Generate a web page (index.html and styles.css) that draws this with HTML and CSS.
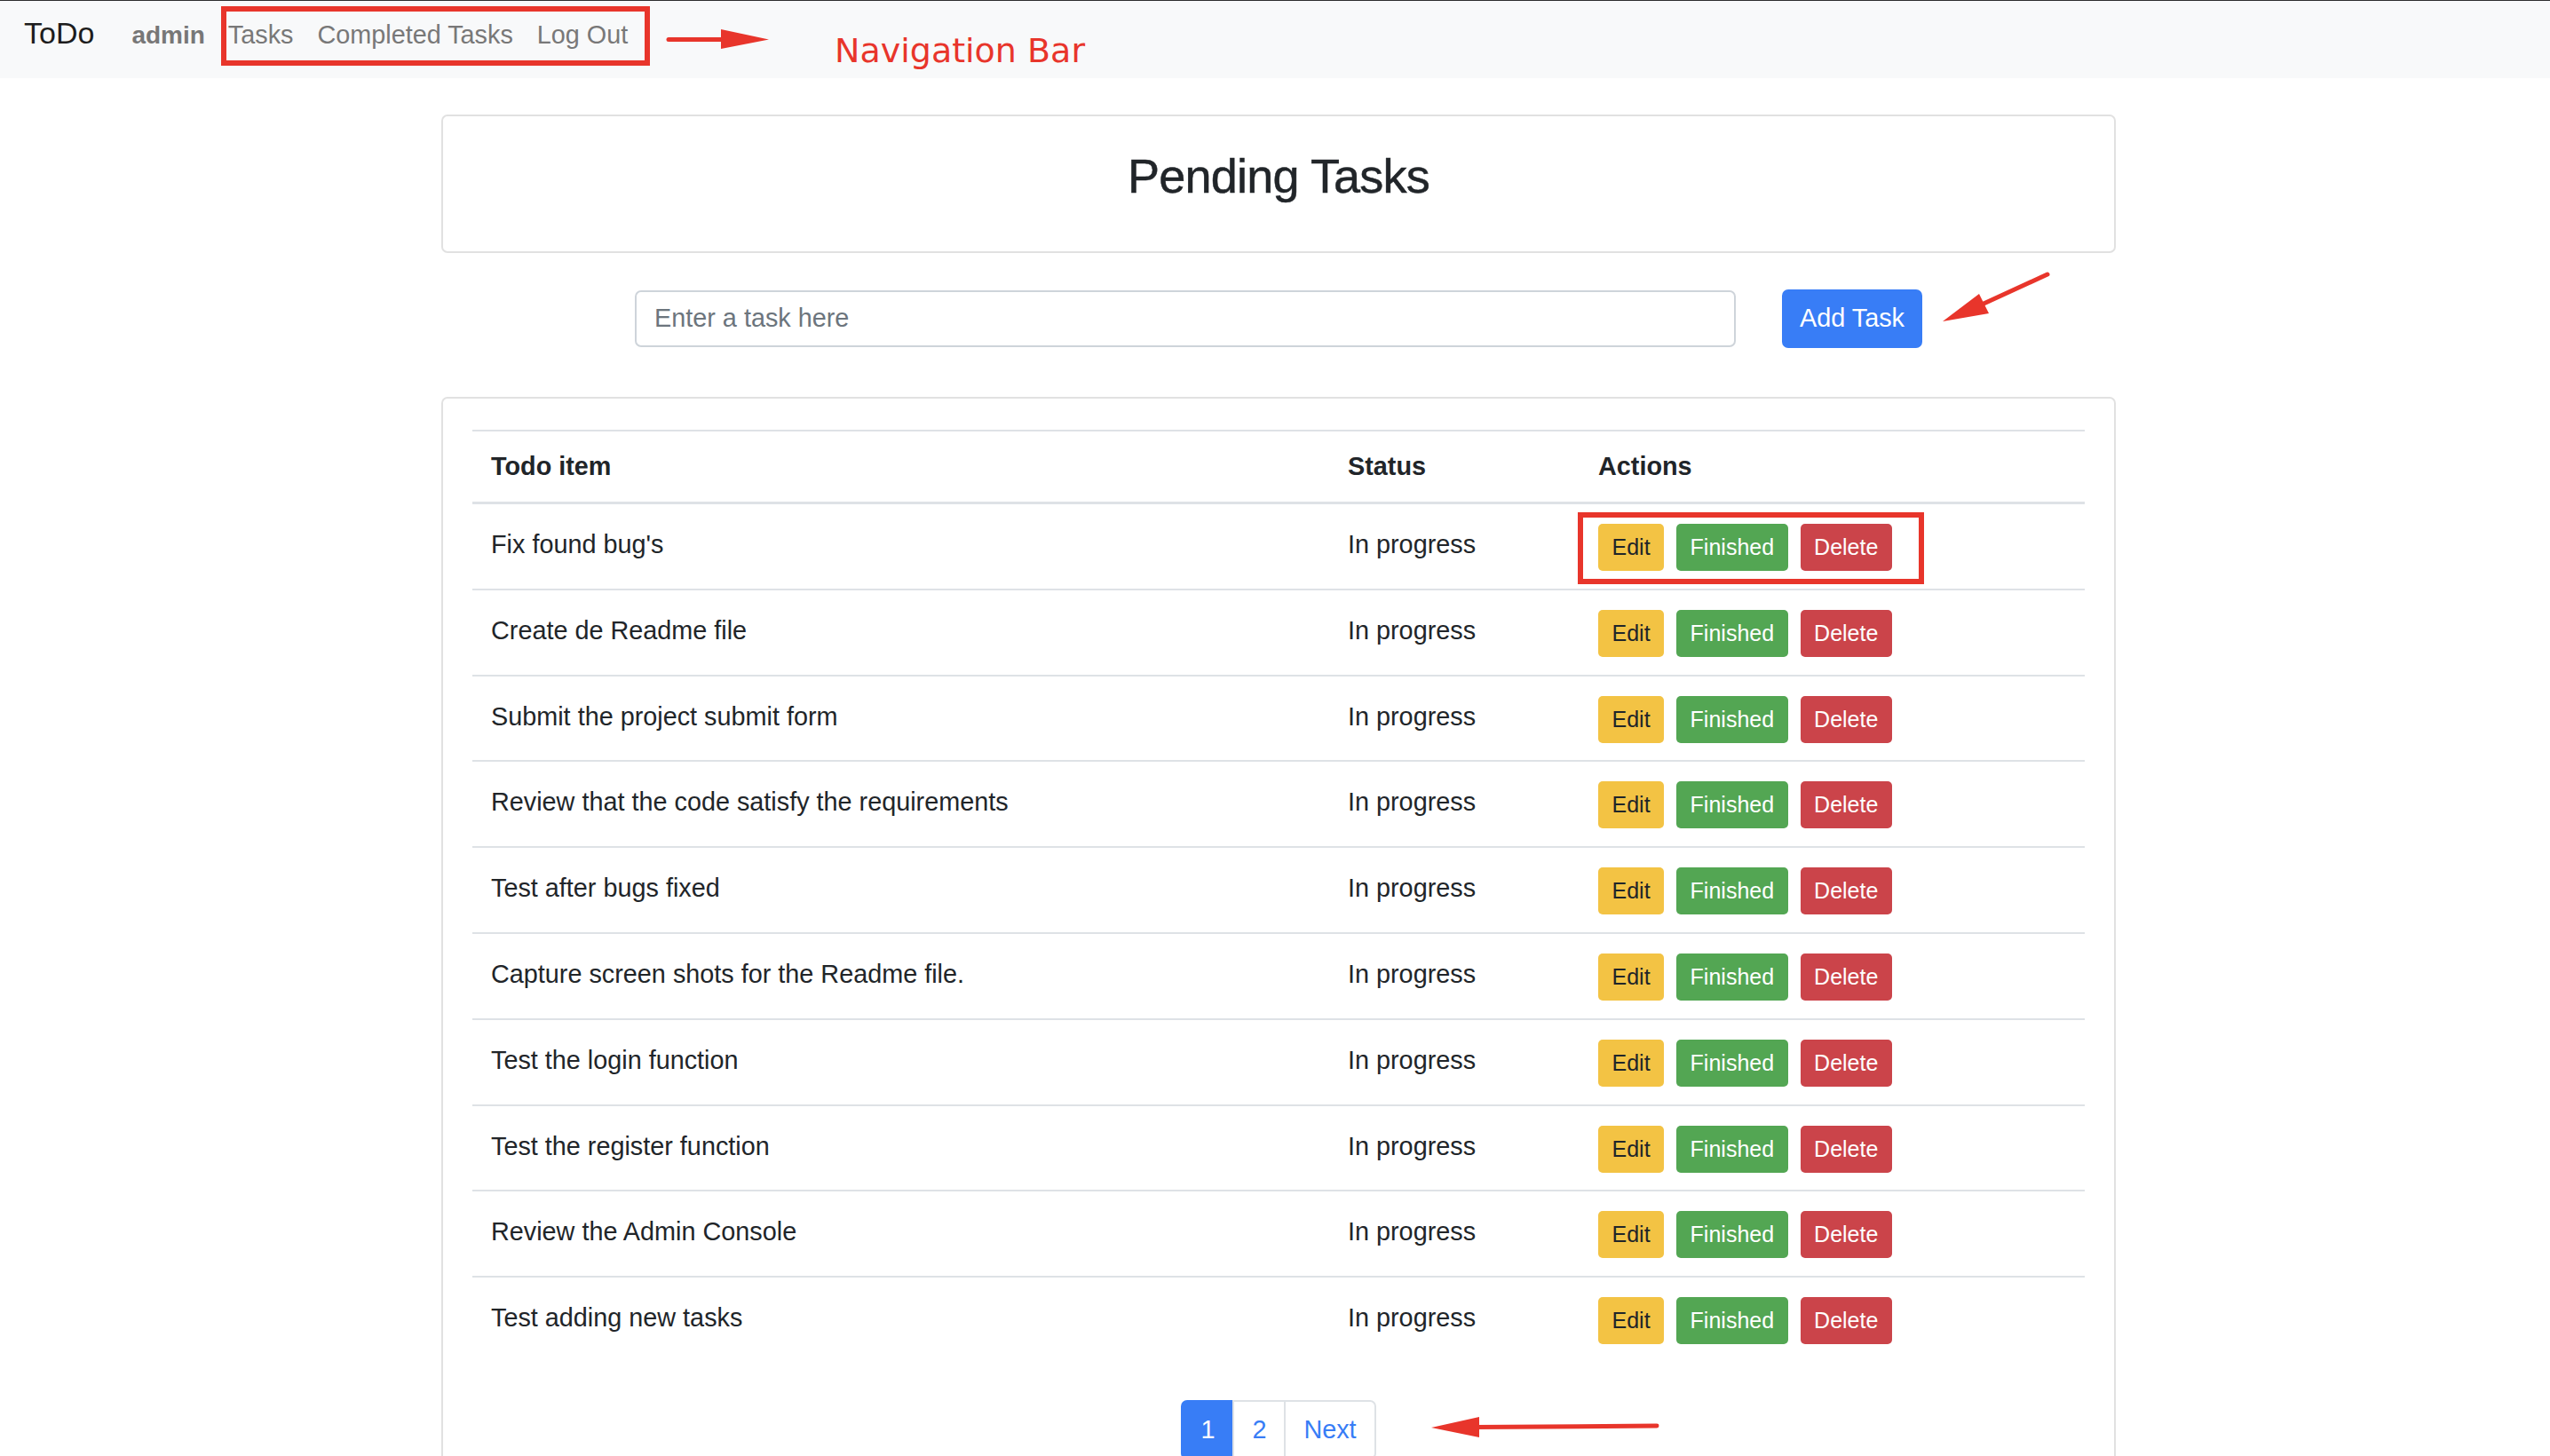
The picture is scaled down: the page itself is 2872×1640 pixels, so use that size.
FILE: index.html
```html
<!DOCTYPE html>
<html lang="en">
<head>
<meta charset="utf-8">
<title>ToDo - Pending Tasks</title>
<link rel="stylesheet" href="styles.css">
</head>
<body>
<nav class="navbar">
  <a class="brand" href="#">ToDo</a>
  <span class="user">admin</span>
  <ul class="nav-links">
    <li><a href="#">Tasks</a></li>
    <li><a href="#">Completed Tasks</a></li>
    <li><a href="#">Log Out</a></li>
  </ul>
</nav>

<main class="container">
  <section class="card title-card">
    <h2 class="page-title">Pending Tasks</h2>
  </section>

  <form class="add-form">
    <input class="task-input" type="text" placeholder="Enter a task here">
    <button class="btn-add" type="button">Add Task</button>
  </form>

  <section class="card table-card">
    <table class="task-table">
      <thead>
        <tr>
          <th class="col-item">Todo item</th>
          <th class="col-status">Status</th>
          <th>Actions</th>
        </tr>
      </thead>
      <tbody>
        <tr><td>Fix found bug's</td><td>In progress</td><td><div class="actions"><a class="btn btn-edit">Edit</a><a class="btn btn-finish">Finished</a><a class="btn btn-delete">Delete</a></div></td></tr>
        <tr><td>Create de Readme file</td><td>In progress</td><td><div class="actions"><a class="btn btn-edit">Edit</a><a class="btn btn-finish">Finished</a><a class="btn btn-delete">Delete</a></div></td></tr>
        <tr><td>Submit the project submit form</td><td>In progress</td><td><div class="actions"><a class="btn btn-edit">Edit</a><a class="btn btn-finish">Finished</a><a class="btn btn-delete">Delete</a></div></td></tr>
        <tr><td>Review that the code satisfy the requirements</td><td>In progress</td><td><div class="actions"><a class="btn btn-edit">Edit</a><a class="btn btn-finish">Finished</a><a class="btn btn-delete">Delete</a></div></td></tr>
        <tr><td>Test after bugs fixed</td><td>In progress</td><td><div class="actions"><a class="btn btn-edit">Edit</a><a class="btn btn-finish">Finished</a><a class="btn btn-delete">Delete</a></div></td></tr>
        <tr><td>Capture screen shots for the Readme file.</td><td>In progress</td><td><div class="actions"><a class="btn btn-edit">Edit</a><a class="btn btn-finish">Finished</a><a class="btn btn-delete">Delete</a></div></td></tr>
        <tr><td>Test the login function</td><td>In progress</td><td><div class="actions"><a class="btn btn-edit">Edit</a><a class="btn btn-finish">Finished</a><a class="btn btn-delete">Delete</a></div></td></tr>
        <tr><td>Test the register function</td><td>In progress</td><td><div class="actions"><a class="btn btn-edit">Edit</a><a class="btn btn-finish">Finished</a><a class="btn btn-delete">Delete</a></div></td></tr>
        <tr><td>Review the Admin Console</td><td>In progress</td><td><div class="actions"><a class="btn btn-edit">Edit</a><a class="btn btn-finish">Finished</a><a class="btn btn-delete">Delete</a></div></td></tr>
        <tr><td>Test adding new tasks</td><td>In progress</td><td><div class="actions"><a class="btn btn-edit">Edit</a><a class="btn btn-finish">Finished</a><a class="btn btn-delete">Delete</a></div></td></tr>
      </tbody>
    </table>

    <nav class="pager">
      <a class="page-link first active" href="#">1</a>
      <a class="page-link" href="#">2</a>
      <a class="page-link last" href="#">Next</a>
    </nav>
  </section>
</main>

<svg class="annotations" width="2872" height="1640" viewBox="0 0 2872 1640" xmlns="http://www.w3.org/2000/svg">
  <g fill="none" stroke="#e8352b" stroke-width="6">
    <rect x="252" y="10" width="477" height="61"/>
    <rect x="1780" y="580" width="384" height="75"/>
  </g>
  <g stroke="#e8352b" stroke-width="5" stroke-linecap="round" fill="none">
    <line x1="753" y1="44.5" x2="816" y2="44.5"/>
    <line x1="2306" y1="309" x2="2232" y2="343"/>
    <line x1="1866" y1="1606" x2="1660" y2="1607.5"/>
  </g>
  <g fill="#e8352b">
    <polygon points="812,33 866,44.5 812,55"/>
    <polygon points="2188,362 2229,331 2240,353"/>
    <polygon points="1612,1608 1666,1596 1666,1619"/>
  </g>
  <text class="note" x="940" y="70">Navigation Bar</text>
</svg>
</body>
</html>
```

FILE: styles.css
```css
html {
  overflow: hidden;
}

body {
  margin: 0;
  height: 1640px;
  overflow: hidden;
  background: #ffffff;
  color: #212529;
  font-family: "Liberation Sans", Arial, sans-serif;
  font-size: 28.8px;
}

/* ---------- Navbar ---------- */
.navbar {
  display: flex;
  align-items: baseline;
  box-sizing: border-box;
  height: 88px;
  padding: 16px 0 0 27px;
  border-top: 1px solid #2e2e2e;
  background: #f8f9fa;
}

.brand {
  font-size: 34px;
  line-height: 40px;
  color: #1d1d1d;
  text-decoration: none;
  margin-right: 42px;
}

.user {
  font-size: 28px;
  line-height: 40px;
  font-weight: bold;
  color: #777777;
  margin-right: 26px;
}

.nav-links {
  display: flex;
  gap: 27px;
  list-style: none;
  margin: 0;
  padding: 0;
}

.nav-links a {
  font-size: 28.8px;
  line-height: 40px;
  color: #787878;
  text-decoration: none;
}

/* ---------- Layout ---------- */
.container {
  width: 1886px;
  margin-left: calc(50% - 939px);
}

.card {
  background: #ffffff;
  border: 2px solid #e1e1e1;
  border-radius: 7px;
}

.title-card {
  margin-top: 41px;
  padding: 35px 0 52px;
  text-align: center;
}

.page-title {
  margin: 0;
  font-size: 54px;
  line-height: 64.8px;
  font-weight: normal;
  letter-spacing: -0.8px;
  color: #212529;
  -webkit-text-stroke: 0.5px #212529;
}

/* ---------- Add form ---------- */
.add-form {
  display: flex;
  justify-content: center;
  align-items: center;
  gap: 52px;
  margin: 41px 0 0;
  height: 66px;
}

.task-input {
  box-sizing: border-box;
  width: 1240px;
  height: 64px;
  padding: 0 20px;
  border: 2px solid #ced4da;
  border-radius: 7px;
  font-family: "Liberation Sans", Arial, sans-serif;
  font-size: 28.8px;
  color: #212529;
  background: #ffffff;
  outline: none;
}

.task-input::placeholder {
  color: #6c757d;
}

.btn-add {
  height: 66px;
  padding: 0 20px;
  border: none;
  border-radius: 7px;
  background: #387df6;
  color: #ffffff;
  font-family: "Liberation Sans", Arial, sans-serif;
  font-size: 28.8px;
}

/* ---------- Table card ---------- */
.table-card {
  margin-top: 55px;
  padding: 35px 33px 60px;
}

.task-table {
  width: 100%;
  table-layout: fixed;
  border-collapse: separate;
  border-spacing: 0;
}

.task-table th {
  box-sizing: border-box;
  text-align: left;
  font-weight: bold;
  padding: 18px 21px;
  line-height: 43.2px;
  border-top: 2px solid #dee2e6;
  border-bottom: 3px solid #dee2e6;
}

.task-table .col-item {
  width: 965px;
}

.task-table .col-status {
  width: 282px;
}

.task-table td {
  padding: 22px 21px 19.8px;
  line-height: 46px;
  vertical-align: top;
  border-bottom: 2px solid #dee2e6;
}

.task-table tbody tr:last-child td {
  border-bottom: none;
}

.actions {
  display: flex;
  gap: 14px;
}

.btn {
  display: inline-flex;
  align-items: center;
  justify-content: center;
  box-sizing: border-box;
  height: 53px;
  padding: 0 15.5px;
  border-radius: 5px;
  font-size: 25px;
  line-height: 1;
  color: #ffffff;
  text-decoration: none;
}

.btn-edit {
  background: #f3c344;
  color: #212529;
}

.btn-finish {
  background: #53a653;
}

.btn-delete {
  background: #cb444a;
}

/* ---------- Pagination ---------- */
.pager {
  display: flex;
  justify-content: center;
  margin-top: 43px;
}

.page-link {
  display: block;
  box-sizing: border-box;
  height: 67px;
  padding: 0 20px;
  line-height: 63px;
  border: 2px solid #dee2e6;
  color: #387df6;
  text-decoration: none;
  background: #ffffff;
}

.page-link + .page-link {
  margin-left: -2px;
}

.page-link.first {
  border-radius: 7px 0 0 7px;
}

.page-link.last {
  border-radius: 0 7px 7px 0;
}

.page-link.active {
  background: #387df6;
  border-color: #387df6;
  color: #ffffff;
}

/* ---------- Annotation overlay ---------- */
.annotations {
  position: absolute;
  top: 0;
  left: 0;
  pointer-events: none;
}

.note {
  font-family: "DejaVu Sans", sans-serif;
  font-size: 38px;
  fill: #e8352b;
}
```
